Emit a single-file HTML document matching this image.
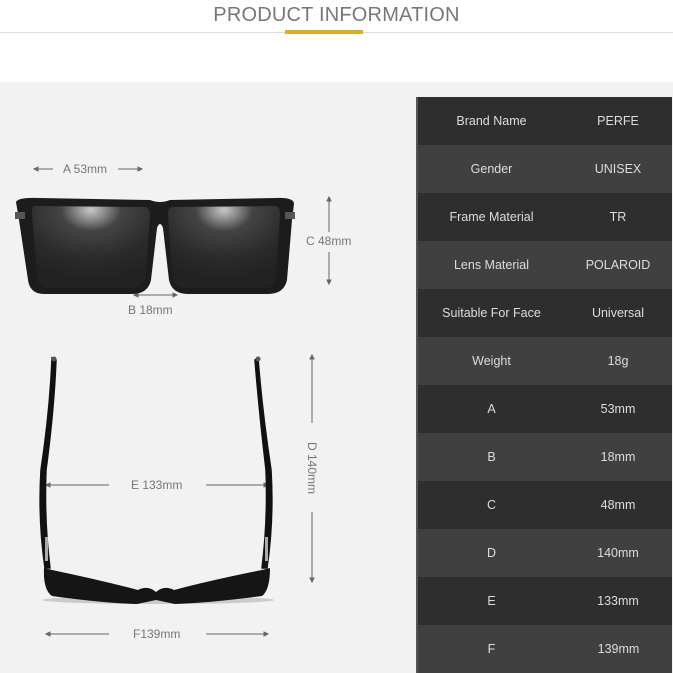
<!DOCTYPE html>
<html><head><meta charset="utf-8"><style>
*{margin:0;padding:0;box-sizing:border-box}
body{width:673px;height:673px;overflow:hidden;background:#fff;font-family:"Liberation Sans",sans-serif;position:relative}
.abs{position:absolute}
.title{left:0;width:673px;top:4px;text-align:center;font-size:20px;color:#777;letter-spacing:0.2px}
.gl{left:0;top:32px;width:673px;height:1px;background:#dcdcdc}
.gold{left:285px;top:30px;width:78px;height:4px;background:#d4ad2a}
.bg{left:0;top:82px;width:673px;height:591px;background:#f2f2f2}
table{position:absolute;left:416px;top:97px;width:257px;border-collapse:collapse;border-left:2px solid #555}
td{height:48px;color:#ddd;font-size:12.5px;text-align:center;vertical-align:middle}
td:first-child{width:148px}
tr:nth-child(odd){background:#2e2e2e}
tr:nth-child(even){background:#404040}
.lbl{font-size:12px;color:#777;white-space:nowrap}
</style></head><body>
<div class="abs title">PRODUCT INFORMATION</div>
<div class="abs gl"></div>
<div class="abs gold"></div>
<div class="abs bg"></div>

<svg class="abs" style="left:0;top:82px" width="416" height="591" viewBox="0 82 416 591">
<g stroke="#666" stroke-width="1" fill="#666">
<line x1="36" y1="169" x2="53" y2="169"/><path d="M34 169l4-2v4z"/>
<line x1="118" y1="169" x2="139" y2="169"/><path d="M142 169l-4-2v4z"/>
<line x1="329" y1="199" x2="329" y2="232"/><path d="M329 197l-2 4h4z"/>
<line x1="329" y1="252" x2="329" y2="282"/><path d="M329 284l-2-4h4z"/>
<line x1="136" y1="295" x2="175" y2="295"/><path d="M134 295l4-2v4z"/><path d="M177 295l-4-2v4z"/>
<line x1="312" y1="357" x2="312" y2="423"/><path d="M312 355l-2 4h4z"/>
<line x1="312" y1="512" x2="312" y2="580"/><path d="M312 582l-2-4h4z"/>
<line x1="48" y1="485" x2="109" y2="485"/><path d="M46 485l4-2v4z"/>
<line x1="206" y1="485" x2="266" y2="485"/><path d="M268 485l-4-2v4z"/>
<line x1="48" y1="634" x2="109" y2="634"/><path d="M46 634l4-2v4z"/>
<line x1="206" y1="634" x2="266" y2="634"/><path d="M268 634l-4-2v4z"/>
</g>
<defs>
<radialGradient id="lg" cx="0.5" cy="0.05" r="0.85"><stop offset="0" stop-color="#c8c8c8"/><stop offset="0.3" stop-color="#444"/><stop offset="0.7" stop-color="#2a2a2a"/><stop offset="1" stop-color="#222"/></radialGradient>
</defs>
<!-- front frame -->
<path d="M16 202 Q18 197 40 198 L150 200 Q160 204 170 200 L275 198 Q294 197 294 204 L292 220 L287 280 Q284 294 268 294 L188 294 Q172 294 169 280 L163 228 Q160 220 157 228 L151 280 Q148 294 132 294 L44 294 Q30 294 28 280 L19 220 Z" fill="#1c1c1c"/>
<path d="M34 206 L145 207 Q151 208 150 216 L146 274 Q144 288 130 288 L50 288 Q38 288 37 276 L32 214 Q32 206 34 206 Z" fill="url(#lg)"/>
<path d="M172 207 L276 206 Q280 206 280 214 L276 276 Q275 288 263 288 L186 288 Q174 288 172 274 L168 216 Q167 208 172 207 Z" fill="url(#lg)"/>
<rect x="15" y="212" width="10" height="7" fill="#555"/><rect x="285" y="212" width="10" height="7" fill="#555"/>
<!-- top view -->
<ellipse cx="158" cy="600" rx="116" ry="4" fill="#bbb" opacity="0.7"/>
<path d="M52 358 Q50 410 41 470 Q38 520 45 568 L50 568 Q44 520 46 470 Q54 410 56 360 Z" fill="#111" stroke="#111" stroke-width="1.5"/>
<path d="M258 358 Q262 410 271 470 Q274 520 267 568 L262 568 Q268 520 266 470 Q259 410 255 360 Z" fill="#111" stroke="#111" stroke-width="1.5"/>
<circle cx="54" cy="359" r="2.5" fill="#555"/><circle cx="258" cy="359" r="2.5" fill="#555"/>
<path d="M44 568 L52 570 Q100 580 138 590 Q148 585 156 592 Q164 585 174 590 Q212 580 262 570 L270 568 Q270 590 262 596 Q210 603 175 604 L156 600 L137 604 Q102 603 52 596 Q43 590 44 568Z" fill="#151515"/>
<rect x="45" y="537" width="3" height="24" fill="#aaa"/><rect x="265" y="537" width="3" height="24" fill="#aaa"/>
</svg>

<div class="abs lbl" style="left:63px;top:162px">A 53mm</div>
<div class="abs lbl" style="left:306px;top:234px">C 48mm</div>
<div class="abs lbl" style="left:128px;top:303px">B 18mm</div>
<div class="abs lbl" style="left:131px;top:478px">E 133mm</div>
<div class="abs lbl" style="left:133px;top:627px">F139mm</div>
<div class="abs lbl" style="left:285px;top:461px;transform:rotate(90deg);width:54px;text-align:center">D 140mm</div>

<table>
<tr><td>Brand Name</td><td>PERFE</td></tr>
<tr><td>Gender</td><td>UNISEX</td></tr>
<tr><td>Frame Material</td><td>TR</td></tr>
<tr><td>Lens Material</td><td>POLAROID</td></tr>
<tr><td>Suitable For Face</td><td>Universal</td></tr>
<tr><td>Weight</td><td>18g</td></tr>
<tr><td>A</td><td>53mm</td></tr>
<tr><td>B</td><td>18mm</td></tr>
<tr><td>C</td><td>48mm</td></tr>
<tr><td>D</td><td>140mm</td></tr>
<tr><td>E</td><td>133mm</td></tr>
<tr><td>F</td><td>139mm</td></tr>
</table>
</body></html>
